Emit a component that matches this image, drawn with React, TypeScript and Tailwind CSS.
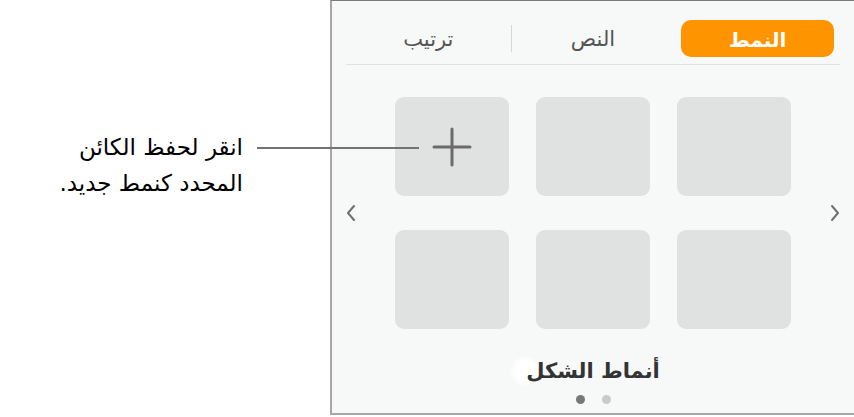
const tabs = [
  { label: "النمط", active: true },
  { label: "النص", active: false },
  { label: "ترتيب", active: false },
]

const Chevron = ({ dir }: { dir: "left" | "right" }) => (
  <svg width="10" height="18" viewBox="0 0 10 18" fill="none">
    <path
      d={dir === "left" ? "M8 2 L2 9 L8 16" : "M2 2 L8 9 L2 16"}
      stroke="#6f6f6f"
      strokeWidth="2"
      strokeLinecap="round"
      strokeLinejoin="round"
    />
  </svg>
)

const App = () => {
  return (
    <div
      className="w-[854px] h-[417px] bg-white flex relative overflow-hidden"
      style={{ fontFamily: '"DejaVu Sans", sans-serif' }}
    >
      {/* callout text */}
      <div className="w-[330px] shrink-0 pt-[129px] pr-[87px]" dir="rtl">
        <p className="text-[23px] leading-[36px] text-black text-right">
          انقر لحفظ الكائن
          <br />
          المحدد كنمط جديد.
        </p>
      </div>

      {/* style panel */}
      <section className="flex-1 h-[415px] bg-[#f7f8f8] border-l-2 border-t border-b-2 border-l-[#a6a6a6] border-t-[#7a7a7a] border-b-[#a6a6a6] flex flex-col">
        <div className="px-[14px] pt-[19px]">
          <div className="flex flex-row-reverse h-[37px] items-center" dir="ltr">
            {tabs.map((t, i) => (
              <div key={t.label} className="flex-1 h-full flex items-center justify-center relative">
                {t.active ? (
                  <div className="w-[153px] h-[37px] rounded-[10px] bg-[#fe9500] text-white font-bold text-[20px] flex items-center justify-center pt-[3px]">
                    {t.label}
                  </div>
                ) : (
                  <span className="text-[21px] text-[#555] pt-[3px]">{t.label}</span>
                )}
                {i === 1 && <span className="absolute left-0 top-[5px] h-[27px] w-px bg-[#d6d6d6]" />}
              </div>
            ))}
          </div>
          <div className="h-px bg-[#e1e1e1] mt-[7px]" />
        </div>

        <div className="flex items-center justify-between px-[14px] mt-[32px]">
          <Chevron dir="left" />
          <div className="grid grid-cols-[114px_114px_114px] grid-rows-[99px_99px] gap-x-[27px] gap-y-[34px]">
            {Array.from({ length: 6 }).map((_, i) => (
              <div key={i} className="rounded-[9px] bg-[#e0e1e1] flex items-center justify-center">
                {i === 0 && (
                  <svg width="40" height="40" viewBox="0 0 40 40">
                    <path d="M20 2 V38 M2 20 H38" stroke="#6b6b6b" strokeWidth="3" strokeLinecap="round" />
                  </svg>
                )}
              </div>
            ))}
          </div>
          <Chevron dir="right" />
        </div>

        <div className="flex flex-col items-center mt-[27px]">
          <div className="relative">
            <span className="absolute -left-[14px] top-[2px] w-[26px] h-[26px] rounded-full bg-white blur-[2px]" />
            <p className="relative text-[21px] font-bold text-[#333] leading-[30px]" dir="rtl">
              أنماط الشكل
            </p>
          </div>
          <div className="flex gap-[17px] mt-[9px]">
            <span className="w-[9px] h-[9px] rounded-full bg-[#777]" />
            <span className="w-[9px] h-[9px] rounded-full bg-[#cacaca]" />
          </div>
        </div>
      </section>

      {/* leader line */}
      <span className="absolute left-[257px] top-[147px] w-[162px] h-[2px] bg-[#737373]" />
    </div>
  )
}

export default App
